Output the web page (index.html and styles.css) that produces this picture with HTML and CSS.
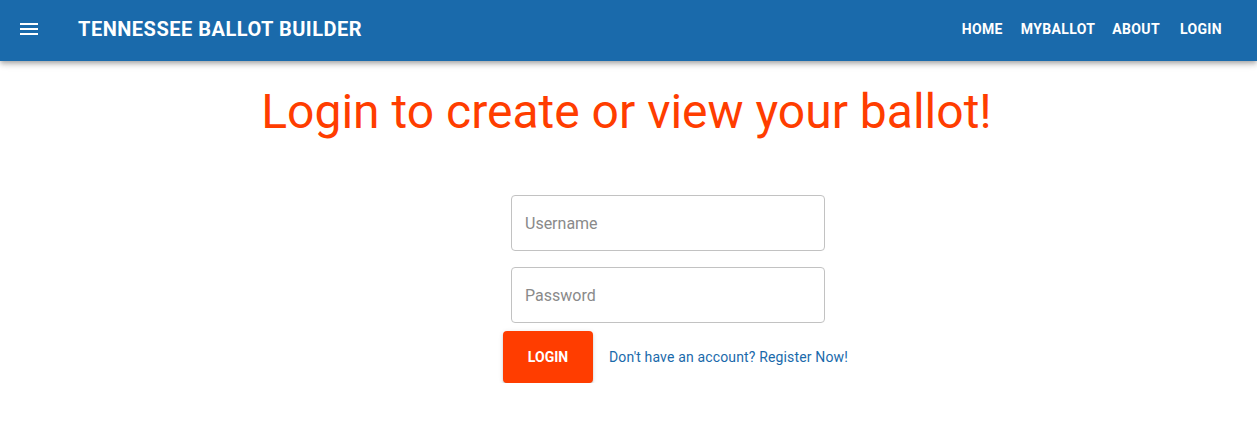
FILE: index.html
```html
<!DOCTYPE html>
<html>
<head>
<meta charset="utf-8">
<link rel="stylesheet" href="styles.css">
</head>
<body>
<header class="appbar">
  <button class="menu-btn" aria-label="menu">
    <svg width="18" height="12" viewBox="0 0 18 12"><rect x="0" y="0" width="18" height="2" fill="#fff"/><rect x="0" y="5" width="18" height="2" fill="#fff"/><rect x="0" y="10" width="18" height="2" fill="#fff"/></svg>
  </button>
  <div class="brand">TENNESSEE BALLOT BUILDER</div>
  <nav class="nav">
    <a class="nav-link">HOME</a>
    <a class="nav-link">MYBALLOT</a>
    <a class="nav-link">ABOUT</a>
    <a class="nav-link">LOGIN</a>
  </nav>
</header>
<main class="content">
  <h1 class="title">Login to create or view your ballot!</h1>
  <form class="login-form">
    <div class="field"><input type="text" placeholder="Username"></div>
    <div class="field"><input type="password" placeholder="Password"></div>
    <div class="actions">
      <button type="button" class="login-btn">LOGIN</button>
      <span class="register">Don't have an account? Register Now!</span>
    </div>
  </form>
</main>
</body>
</html>
```
FILE: styles.css
```css
* { box-sizing: border-box; }
html, body { margin: 0; padding: 0; }
body {
  font-family: Roboto, "Liberation Sans", sans-serif;
  background: #fff;
  width: 1257px;
}
.appbar {
  height: 61px;
  background: #1a6aab;
  display: flex;
  align-items: center;
  padding: 0 25px 4px 20px;
  box-shadow: 0 2px 4px -1px rgba(0,0,0,.2), 0 4px 5px 0 rgba(0,0,0,.14), 0 1px 10px 0 rgba(0,0,0,.12);
  position: relative;
  z-index: 1;
}
.menu-btn {
  background: none;
  border: 0;
  padding: 0;
  width: 18px;
  height: 12px;
  display: flex;
}
.brand {
  color: #fff;
  font-weight: 700;
  font-size: 20px;
  letter-spacing: 0.5px;
  margin-left: 40px;
}
.nav {
  margin-left: auto;
  display: flex;
  align-items: center;
}
.nav-link {
  color: #fff;
  font-weight: 700;
  font-size: 14px;
  letter-spacing: 0.35px;
  padding: 0 10px;
}
.nav-link:first-child { padding-right: 8px; }
.nav-link:nth-child(2) { padding-right: 8px; }
.nav-link:nth-child(3) { padding-left: 9px; }
.content {
  display: flex;
  flex-direction: column;
  align-items: center;
}
.title {
  color: #ff3d00;
  font-weight: 400;
  font-size: 48px;
  margin: 22px 4px 0 0;
  line-height: 58px;
}
.login-form {
  margin-top: 54px;
  width: 314px;
  display: flex;
  flex-direction: column;
  margin-left: 79px;
}
.field { width: 314px; margin-bottom: 16px; }
.field input {
  display: block;
  width: 314px;
  height: 56px;
  border: 1px solid #c2c2c2;
  border-radius: 4px;
  padding: 0 13px;
  font-family: Roboto, "Liberation Sans", sans-serif;
  font-size: 16px;
  color: #333;
  outline: none;
}
.field input::placeholder { color: #8a8a8a; }
.actions {
  display: flex;
  align-items: center;
  margin-top: -8px;
  margin-left: -8px;
}
.login-btn {
  flex: none;
  width: 90px;
  height: 52px;
  background: #ff3d00;
  border: 0;
  border-radius: 4px;
  color: #fff;
  font-family: Roboto, "Liberation Sans", sans-serif;
  font-weight: 700;
  font-size: 14px;
  box-shadow: 0 3px 1px -2px rgba(0,0,0,.2), 0 2px 2px 0 rgba(0,0,0,.14), 0 1px 5px 0 rgba(0,0,0,.12);
}
.register {
  margin-left: 16px;
  font-size: 14px;
  letter-spacing: 0.15px;
  color: #1a6aab;
  white-space: nowrap;
}
```
